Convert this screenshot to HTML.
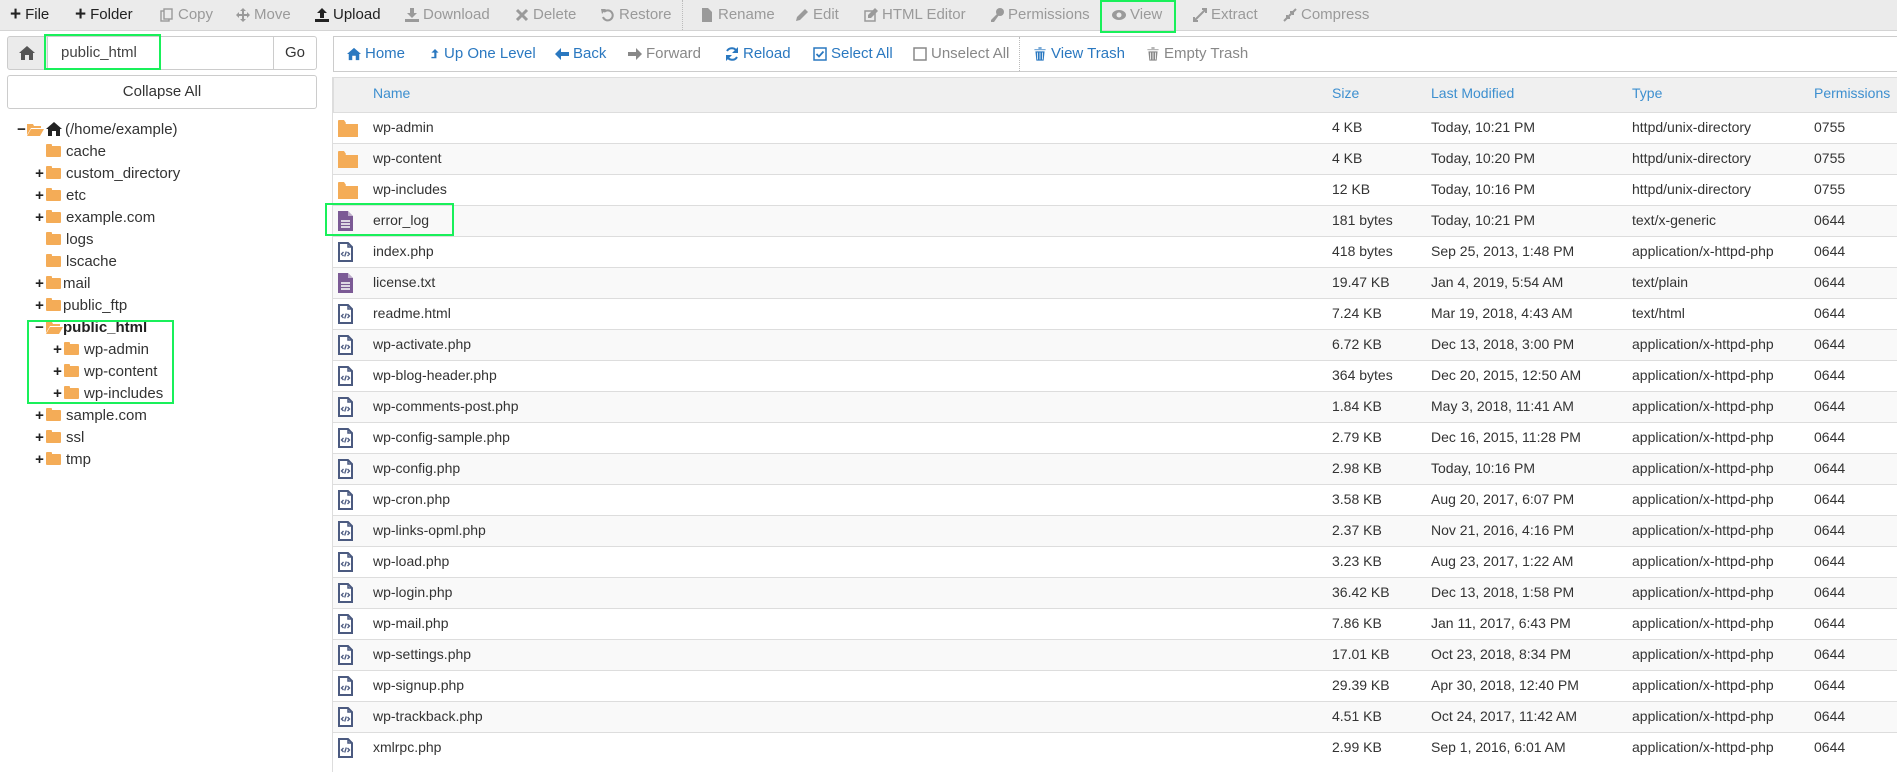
<!DOCTYPE html>
<html><head><meta charset="utf-8">
<style>
*{box-sizing:border-box;margin:0;padding:0}
body{width:1897px;height:772px;overflow:hidden;background:#fff;font-family:"Liberation Sans",Arial,sans-serif;font-size:15px;color:#333;position:relative}
.a{position:absolute;white-space:nowrap}
#tb{position:absolute;left:0;top:0;width:1897px;height:31px;background:#ebebeb;border-bottom:1px solid #d4d4d4}
.ti{position:absolute;top:6px;font-size:15px;color:#222;display:flex;align-items:center;gap:4px}
.ti.d{color:#9a9a9a}
.ti svg{width:14px;height:14px}
.g{position:absolute;border:2px solid #19f05a}
.box{position:absolute;border:1px solid #ccc;background:#fff}
.nav{position:absolute;top:45px;font-size:15px;color:#2a78c0;display:flex;align-items:center;gap:4px}
.nav.d{color:#888}
.nav svg{width:14px;height:14px}
.tr{position:absolute;height:22px;display:flex;align-items:center;font-size:15px;color:#333}
.fold{display:inline-block;width:15px;height:11px;background:#f4ac57;border-radius:1px;position:relative;margin-top:1px}
.fold:before{content:"";position:absolute;left:0;top:-2px;width:6px;height:3px;background:#f4ac57;border-radius:1px 1px 0 0}
.pm{display:inline-block;width:11px;font-weight:bold;font-size:15px;color:#222;text-align:center}
.row{position:absolute;left:333px;width:1564px;height:31px;border-top:1px solid #ddd;font-size:14px;color:#333}
.row.o{background:#f9f9f9}
.row span{position:absolute;top:6px;white-space:nowrap}
.row .ic{position:absolute;left:5px;top:5px}
.hd{color:#3d8fcf;font-size:14px}
</style></head><body>
<div id="tb">
 <div class="ti" style="left:10px"><b style="font-size:19px;line-height:14px">+</b>File</div>
 <div class="ti" style="left:75px"><b style="font-size:19px;line-height:14px">+</b>Folder</div>
 <div class="ti d" style="left:160px"><svg viewBox="0 0 14 14"><rect x="1" y="3" width="8" height="10" fill="none" stroke="#9a9a9a" stroke-width="1.4"/><rect x="4" y="1" width="8" height="10" fill="#ebebeb" stroke="#9a9a9a" stroke-width="1.4"/></svg>Copy</div>
 <div class="ti d" style="left:236px"><svg viewBox="0 0 14 14"><path d="M7 0L10 3H4ZM7 14L4 11H10ZM0 7L3 4V10ZM14 7L11 10V4ZM6 3H8V11H6ZM3 6H11V8H3Z" fill="#9a9a9a"/></svg>Move</div>
 <div class="ti" style="left:315px"><svg viewBox="0 0 14 14"><path d="M7 0L12 5H9V10H5V5H2ZM0 11H14V14H0Z" fill="#222"/></svg>Upload</div>
 <div class="ti d" style="left:405px"><svg viewBox="0 0 14 14"><path d="M5 0H9V5H12L7 10L2 5H5ZM0 11H14V14H0Z" fill="#9a9a9a"/></svg>Download</div>
 <div class="ti d" style="left:515px"><svg viewBox="0 0 14 14"><path d="M2 2L12 12M12 2L2 12" stroke="#9a9a9a" stroke-width="3"/></svg>Delete</div>
 <div class="ti d" style="left:601px"><svg viewBox="0 0 14 14"><path d="M3 4A5 5 0 1 1 2 9" fill="none" stroke="#9a9a9a" stroke-width="2"/><path d="M0 1L5 1L1 6Z" fill="#9a9a9a"/></svg>Restore</div>
 <div class="a" style="left:682px;top:0;height:30px;border-left:1px dotted #bbb"></div>
 <div class="ti d" style="left:700px"><svg viewBox="0 0 14 14"><path d="M2 0H8L12 4V14H2Z" fill="#9a9a9a"/></svg>Rename</div>
 <div class="ti d" style="left:795px"><svg viewBox="0 0 14 14"><path d="M10 1L13 4L5 12L1 13L2 9Z" fill="#9a9a9a"/></svg>Edit</div>
 <div class="ti d" style="left:864px"><svg viewBox="0 0 14 14"><rect x="1" y="3" width="10" height="10" fill="none" stroke="#9a9a9a" stroke-width="1.5"/><path d="M11 0L14 3L7 10L4 10L4 7Z" fill="#9a9a9a"/></svg>HTML Editor</div>
 <div class="ti d" style="left:990px"><svg viewBox="0 0 14 14"><circle cx="10" cy="4" r="4" fill="#9a9a9a"/><path d="M8 5L1 12V14H4L9 7Z" fill="#9a9a9a"/></svg>Permissions</div>
 <div class="ti d" style="left:1112px"><svg viewBox="0 0 14 14"><ellipse cx="7" cy="7" rx="7" ry="5" fill="#9a9a9a"/><circle cx="7" cy="7" r="2.5" fill="#ebebeb"/></svg>View</div>
 <div class="ti d" style="left:1193px"><svg viewBox="0 0 14 14"><path d="M1 13L13 1M9 1H13V5M1 9V13H5" fill="none" stroke="#9a9a9a" stroke-width="2"/></svg>Extract</div>
 <div class="ti d" style="left:1283px"><svg viewBox="0 0 14 14"><path d="M1 13L13 1M4 7V10H7M7 4H10V7" fill="none" stroke="#9a9a9a" stroke-width="2"/></svg>Compress</div>
</div>
<div class="g" style="left:1100px;top:0;width:76px;height:33px"></div>

<!-- left panel -->
<div class="box" style="left:7px;top:36px;width:41px;height:34px;background:#ebebeb;border-radius:3px 0 0 3px"></div>
<svg class="a" style="left:19px;top:46px" width="16" height="14" viewBox="0 0 16 14"><path d="M8 0L16 7H14V14H10V9H6V14H2V7H0Z" fill="#555"/></svg>
<div class="box" style="left:47px;top:36px;width:227px;height:34px"></div>
<div class="a" style="left:61px;top:44px;font-size:15px;color:#444">public_html</div>
<div class="box" style="left:273px;top:36px;width:44px;height:34px;border-radius:0 3px 3px 0"></div>
<div class="a" style="left:285px;top:44px;color:#333">Go</div>
<div class="g" style="left:44px;top:34px;width:117px;height:36px"></div>
<div class="box" style="left:7px;top:75px;width:310px;height:34px;border-radius:3px"></div>
<div class="a" style="left:0;width:324px;text-align:center;top:83px;color:#333">Collapse All</div>

<div class="tr" style="left:16px;top:118px"><span class="pm">−</span><svg width="17" height="13" viewBox="0 0 17 13"><path d="M0 1H6L7 3H14V5H4L0 12Z" fill="#f4ac57"/><path d="M4 6H17L13 13H0Z" fill="#f4ac57"/></svg><svg style="margin-left:2px" width="16" height="14" viewBox="0 0 16 14"><path d="M8 0L16 7H14V14H10V9H6V14H2V7H0Z" fill="#222"/></svg><span style="margin-left:3px">(/home/example)</span></div>
<div class="tr" style="left:46px;top:140px"><span class="fold"></span><span style="margin-left:5px">cache</span></div>
<div class="tr" style="left:34px;top:162px"><span class="pm">+</span><span class="fold" style="margin-left:1px"></span><span style="margin-left:5px">custom_directory</span></div>
<div class="tr" style="left:34px;top:184px"><span class="pm">+</span><span class="fold" style="margin-left:1px"></span><span style="margin-left:5px">etc</span></div>
<div class="tr" style="left:34px;top:206px"><span class="pm">+</span><span class="fold" style="margin-left:1px"></span><span style="margin-left:5px">example.com</span></div>
<div class="tr" style="left:46px;top:228px"><span class="fold"></span><span style="margin-left:5px">logs</span></div>
<div class="tr" style="left:46px;top:250px"><span class="fold"></span><span style="margin-left:5px">lscache</span></div>
<div class="tr" style="left:34px;top:272px"><span class="pm">+</span><span class="fold" style="margin-left:1px"></span><span style="margin-left:2px">mail</span></div>
<div class="tr" style="left:34px;top:294px"><span class="pm">+</span><span class="fold" style="margin-left:1px"></span><span style="margin-left:2px">public_ftp</span></div>
<div class="tr" style="left:34px;top:316px"><span class="pm">−</span><svg style="margin-left:1px" width="17" height="13" viewBox="0 0 17 13"><path d="M0 1H6L7 3H14V5H4L0 12Z" fill="#f4ac57"/><path d="M4 6H17L13 13H0Z" fill="#f4ac57"/></svg><b style="color:#222">public_html</b></div>
<div class="tr" style="left:52px;top:338px"><span class="pm">+</span><span class="fold" style="margin-left:1px"></span><span style="margin-left:5px">wp-admin</span></div>
<div class="tr" style="left:52px;top:360px"><span class="pm">+</span><span class="fold" style="margin-left:1px"></span><span style="margin-left:5px">wp-content</span></div>
<div class="tr" style="left:52px;top:382px"><span class="pm">+</span><span class="fold" style="margin-left:1px"></span><span style="margin-left:5px">wp-includes</span></div>
<div class="tr" style="left:34px;top:404px"><span class="pm">+</span><span class="fold" style="margin-left:1px"></span><span style="margin-left:5px">sample.com</span></div>
<div class="tr" style="left:34px;top:426px"><span class="pm">+</span><span class="fold" style="margin-left:1px"></span><span style="margin-left:5px">ssl</span></div>
<div class="tr" style="left:34px;top:448px"><span class="pm">+</span><span class="fold" style="margin-left:1px"></span><span style="margin-left:5px">tmp</span></div>
<div class="g" style="left:27px;top:320px;width:147px;height:84px"></div>

<!-- right nav -->
<div class="box" style="left:333px;top:36px;width:1570px;height:36px"></div>
<div class="nav" style="left:347px"><svg viewBox="0 0 16 14"><path d="M8 0L16 7H14V14H10V9H6V14H2V7H0Z" fill="#2a78c0"/></svg>Home</div>
<div class="nav" style="left:430px"><svg viewBox="0 0 14 14" style="width:10px"><path d="M7 0L12 5H9V13H2V11H6V5H2Z" fill="#2a78c0"/></svg>Up One Level</div>
<div class="nav" style="left:555px"><svg viewBox="0 0 14 14"><path d="M0 7L6 1V5H14V9H6V13Z" fill="#2a78c0"/></svg>Back</div>
<div class="nav d" style="left:628px"><svg viewBox="0 0 14 14"><path d="M14 7L8 1V5H0V9H8V13Z" fill="#888"/></svg>Forward</div>
<div class="nav" style="left:725px"><svg viewBox="0 0 14 14"><path d="M12 5A5.5 5.5 0 0 0 2 4M2 9A5.5 5.5 0 0 0 12 10" fill="none" stroke="#2a78c0" stroke-width="2"/><path d="M13 0V6H7ZM1 14V8H7Z" fill="#2a78c0"/></svg>Reload</div>
<div class="nav" style="left:813px"><svg viewBox="0 0 14 14"><rect x="1" y="1" width="12" height="12" fill="none" stroke="#2a78c0" stroke-width="1.5"/><path d="M3.5 7L6 9.5L10.5 4.5" fill="none" stroke="#2a78c0" stroke-width="1.8"/></svg>Select All</div>
<div class="nav d" style="left:913px"><svg viewBox="0 0 14 14"><rect x="1" y="1" width="12" height="12" fill="none" stroke="#888" stroke-width="1.5"/></svg>Unselect All</div>
<div class="a" style="left:1019px;top:37px;height:34px;border-left:1px dotted #bbb"></div>
<div class="nav" style="left:1033px"><svg viewBox="0 0 14 14"><path d="M1 2H13V3.5H1ZM5 0H9V2H5ZM2 4H12L11 14H3ZM4.5 5.5V12.5M7 5.5V12.5M9.5 5.5V12.5" fill="#2a78c0" stroke="#fff" stroke-width="0.8"/></svg>View Trash</div>
<div class="nav d" style="left:1146px"><svg viewBox="0 0 14 14"><path d="M1 2H13V3.5H1ZM5 0H9V2H5ZM2 4H12L11 14H3ZM4.5 5.5V12.5M7 5.5V12.5M9.5 5.5V12.5" fill="#888" stroke="#fff" stroke-width="0.8"/></svg>Empty Trash</div>

<!-- table -->
<div class="a" style="left:333px;top:77px;width:1564px;height:36px;background:#f0f0f0;border-top:1px solid #ddd;border-bottom:1px solid #ddd;border-left:1px solid #ddd"></div>
<div class="a hd" style="left:373px;top:85px">Name</div>
<div class="a hd" style="left:1332px;top:85px">Size</div>
<div class="a hd" style="left:1431px;top:85px">Last Modified</div>
<div class="a hd" style="left:1632px;top:85px">Type</div>
<div class="a hd" style="left:1814px;top:85px">Permissions</div>
<div class="a" style="left:332px;top:77px;height:695px;border-left:1px solid #ddd"></div>

<svg width="0" height="0" style="position:absolute"><defs>
<g id="fo"><path d="M0 3H7L8 5H20V18H0Z" fill="#f4ac57"/><path d="M0 2Q0 1 1 1H6L8 4H0Z" fill="#f4ac57"/></g>
<g id="tx"><path d="M0 0H10L15 5V20H0Z" fill="#7b5a95"/><path d="M10 0V5H15" fill="#fff" opacity=".5"/><path d="M3 10H12M3 13H12M3 16H12" stroke="#fff" stroke-width="1.5"/></g>
<g id="cd"><path d="M1 1H10L14 5V19H1Z" fill="#fff" stroke="#4b5a80" stroke-width="2"/><path d="M10 1V5H14" fill="none" stroke="#4b5a80" stroke-width="1.5"/><path d="M5.5 10L3.5 12L5.5 14M9.5 10L11.5 12L9.5 14M8.3 9.5L6.7 14.5" fill="none" stroke="#4b5a80" stroke-width="1.3"/></g>
</defs></svg>

<div class="row" style="top:112px"><svg class="ic" width="20" height="20" style="top:6px"><use href="#fo"/></svg><span style="left:40px">wp-admin</span><span style="left:999px">4 KB</span><span style="left:1098px">Today, 10:21 PM</span><span style="left:1299px">httpd/unix-directory</span><span style="left:1481px">0755</span></div>
<div class="row o" style="top:143px"><svg class="ic" width="20" height="20" style="top:6px"><use href="#fo"/></svg><span style="left:40px">wp-content</span><span style="left:999px">4 KB</span><span style="left:1098px">Today, 10:20 PM</span><span style="left:1299px">httpd/unix-directory</span><span style="left:1481px">0755</span></div>
<div class="row" style="top:174px"><svg class="ic" width="20" height="20" style="top:6px"><use href="#fo"/></svg><span style="left:40px">wp-includes</span><span style="left:999px">12 KB</span><span style="left:1098px">Today, 10:16 PM</span><span style="left:1299px">httpd/unix-directory</span><span style="left:1481px">0755</span></div>
<div class="row o" style="top:205px"><svg class="ic" width="16" height="21"><use href="#tx"/></svg><span style="left:40px">error_log</span><span style="left:999px">181 bytes</span><span style="left:1098px">Today, 10:21 PM</span><span style="left:1299px">text/x-generic</span><span style="left:1481px">0644</span></div>
<div class="row" style="top:236px"><svg class="ic" width="16" height="21"><use href="#cd"/></svg><span style="left:40px">index.php</span><span style="left:999px">418 bytes</span><span style="left:1098px">Sep 25, 2013, 1:48 PM</span><span style="left:1299px">application/x-httpd-php</span><span style="left:1481px">0644</span></div>
<div class="row o" style="top:267px"><svg class="ic" width="16" height="21"><use href="#tx"/></svg><span style="left:40px">license.txt</span><span style="left:999px">19.47 KB</span><span style="left:1098px">Jan 4, 2019, 5:54 AM</span><span style="left:1299px">text/plain</span><span style="left:1481px">0644</span></div>
<div class="row" style="top:298px"><svg class="ic" width="16" height="21"><use href="#cd"/></svg><span style="left:40px">readme.html</span><span style="left:999px">7.24 KB</span><span style="left:1098px">Mar 19, 2018, 4:43 AM</span><span style="left:1299px">text/html</span><span style="left:1481px">0644</span></div>
<div class="row o" style="top:329px"><svg class="ic" width="16" height="21"><use href="#cd"/></svg><span style="left:40px">wp-activate.php</span><span style="left:999px">6.72 KB</span><span style="left:1098px">Dec 13, 2018, 3:00 PM</span><span style="left:1299px">application/x-httpd-php</span><span style="left:1481px">0644</span></div>
<div class="row" style="top:360px"><svg class="ic" width="16" height="21"><use href="#cd"/></svg><span style="left:40px">wp-blog-header.php</span><span style="left:999px">364 bytes</span><span style="left:1098px">Dec 20, 2015, 12:50 AM</span><span style="left:1299px">application/x-httpd-php</span><span style="left:1481px">0644</span></div>
<div class="row o" style="top:391px"><svg class="ic" width="16" height="21"><use href="#cd"/></svg><span style="left:40px">wp-comments-post.php</span><span style="left:999px">1.84 KB</span><span style="left:1098px">May 3, 2018, 11:41 AM</span><span style="left:1299px">application/x-httpd-php</span><span style="left:1481px">0644</span></div>
<div class="row" style="top:422px"><svg class="ic" width="16" height="21"><use href="#cd"/></svg><span style="left:40px">wp-config-sample.php</span><span style="left:999px">2.79 KB</span><span style="left:1098px">Dec 16, 2015, 11:28 PM</span><span style="left:1299px">application/x-httpd-php</span><span style="left:1481px">0644</span></div>
<div class="row o" style="top:453px"><svg class="ic" width="16" height="21"><use href="#cd"/></svg><span style="left:40px">wp-config.php</span><span style="left:999px">2.98 KB</span><span style="left:1098px">Today, 10:16 PM</span><span style="left:1299px">application/x-httpd-php</span><span style="left:1481px">0644</span></div>
<div class="row" style="top:484px"><svg class="ic" width="16" height="21"><use href="#cd"/></svg><span style="left:40px">wp-cron.php</span><span style="left:999px">3.58 KB</span><span style="left:1098px">Aug 20, 2017, 6:07 PM</span><span style="left:1299px">application/x-httpd-php</span><span style="left:1481px">0644</span></div>
<div class="row o" style="top:515px"><svg class="ic" width="16" height="21"><use href="#cd"/></svg><span style="left:40px">wp-links-opml.php</span><span style="left:999px">2.37 KB</span><span style="left:1098px">Nov 21, 2016, 4:16 PM</span><span style="left:1299px">application/x-httpd-php</span><span style="left:1481px">0644</span></div>
<div class="row" style="top:546px"><svg class="ic" width="16" height="21"><use href="#cd"/></svg><span style="left:40px">wp-load.php</span><span style="left:999px">3.23 KB</span><span style="left:1098px">Aug 23, 2017, 1:22 AM</span><span style="left:1299px">application/x-httpd-php</span><span style="left:1481px">0644</span></div>
<div class="row o" style="top:577px"><svg class="ic" width="16" height="21"><use href="#cd"/></svg><span style="left:40px">wp-login.php</span><span style="left:999px">36.42 KB</span><span style="left:1098px">Dec 13, 2018, 1:58 PM</span><span style="left:1299px">application/x-httpd-php</span><span style="left:1481px">0644</span></div>
<div class="row" style="top:608px"><svg class="ic" width="16" height="21"><use href="#cd"/></svg><span style="left:40px">wp-mail.php</span><span style="left:999px">7.86 KB</span><span style="left:1098px">Jan 11, 2017, 6:43 PM</span><span style="left:1299px">application/x-httpd-php</span><span style="left:1481px">0644</span></div>
<div class="row o" style="top:639px"><svg class="ic" width="16" height="21"><use href="#cd"/></svg><span style="left:40px">wp-settings.php</span><span style="left:999px">17.01 KB</span><span style="left:1098px">Oct 23, 2018, 8:34 PM</span><span style="left:1299px">application/x-httpd-php</span><span style="left:1481px">0644</span></div>
<div class="row" style="top:670px"><svg class="ic" width="16" height="21"><use href="#cd"/></svg><span style="left:40px">wp-signup.php</span><span style="left:999px">29.39 KB</span><span style="left:1098px">Apr 30, 2018, 12:40 PM</span><span style="left:1299px">application/x-httpd-php</span><span style="left:1481px">0644</span></div>
<div class="row o" style="top:701px"><svg class="ic" width="16" height="21"><use href="#cd"/></svg><span style="left:40px">wp-trackback.php</span><span style="left:999px">4.51 KB</span><span style="left:1098px">Oct 24, 2017, 11:42 AM</span><span style="left:1299px">application/x-httpd-php</span><span style="left:1481px">0644</span></div>
<div class="row" style="top:732px"><svg class="ic" width="16" height="21"><use href="#cd"/></svg><span style="left:40px">xmlrpc.php</span><span style="left:999px">2.99 KB</span><span style="left:1098px">Sep 1, 2016, 6:01 AM</span><span style="left:1299px">application/x-httpd-php</span><span style="left:1481px">0644</span></div>

<div class="g" style="left:325px;top:203px;width:129px;height:33px"></div>
</body></html>
